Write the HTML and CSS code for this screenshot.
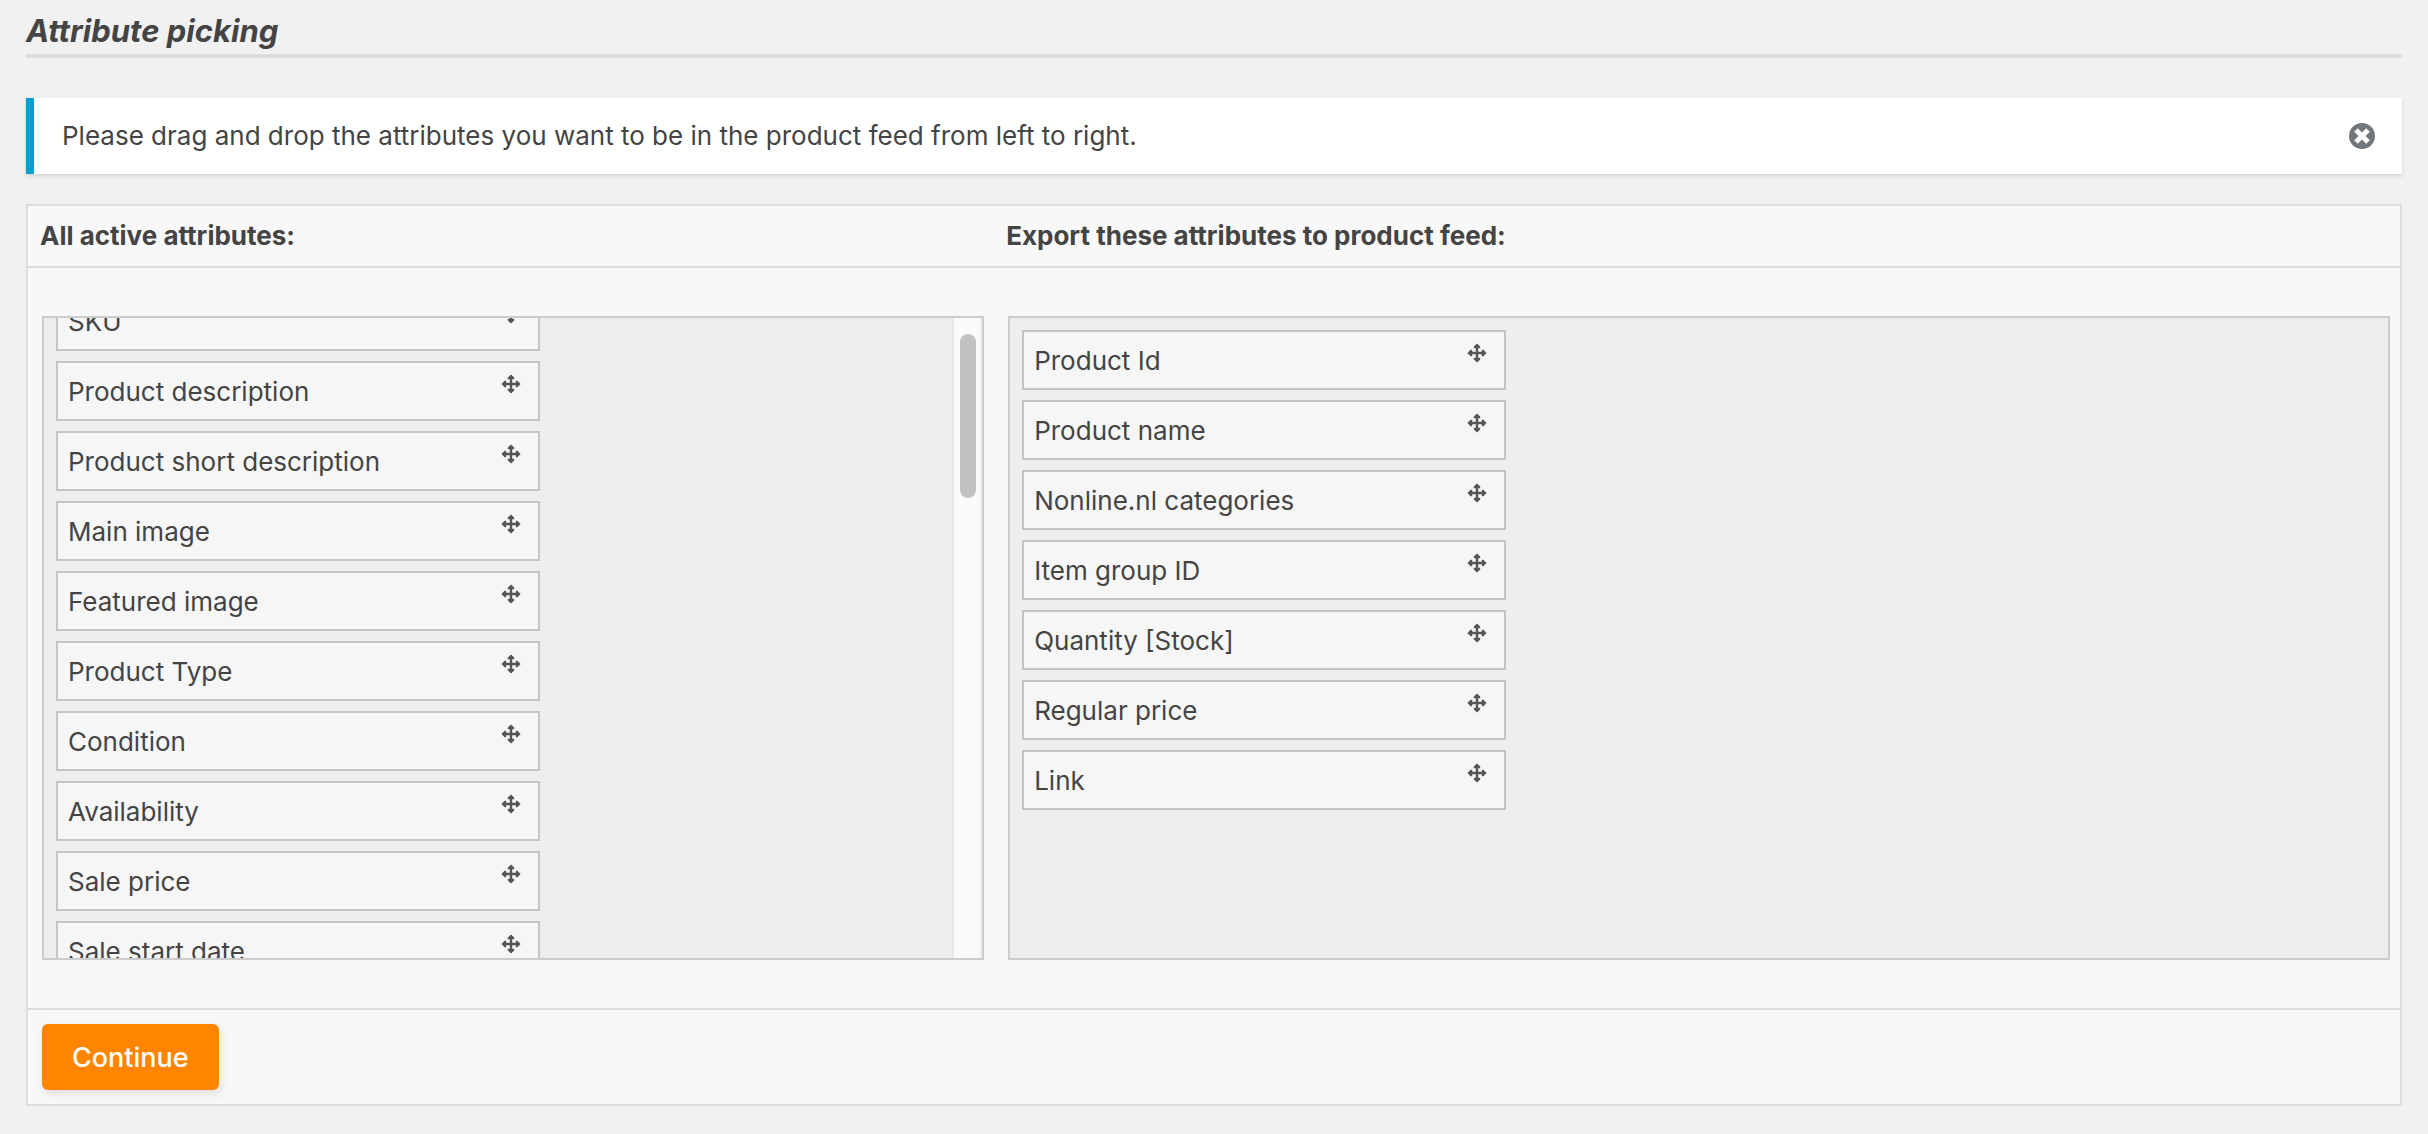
FILE: index.html
```html
<!DOCTYPE html>
<html lang="en">
    <head>
        <meta charset="utf-8">
        <title>Attribute picking</title>
        <link rel="stylesheet" href="styles.css">
    </head>
    <body>
        <svg class="sprite" aria-hidden="true">
            <symbol id="move" viewBox="0 0 20 20">
                <path d="M10 0.4L13.2 3.6V5.2H11.2V8.8H14.8V6.8H16.4L19.6 10L16.4 13.2H14.8V11.2H11.2V14.8H13.2V16.4L10 19.6L6.8 16.4V14.8H8.8V11.2H5.2V13.2H3.6L0.4 10L3.6 6.8H5.2V8.8H8.8V5.2H6.8V3.6Z"/>
            </symbol>
        </svg>

        <h1 class="title">Attribute picking</h1>

        <div class="notice">
            <p>Please drag and drop the attributes you want to be in the product feed from left to right.</p>
            <button class="dismiss" type="button" aria-label="Dismiss">
                <svg viewBox="0 0 26 26">
                    <circle cx="13" cy="13" r="13"/>
                    <path d="M7 7L19 19M19 7L7 19"/>
                </svg>
            </button>
        </div>

        <form class="panel">
            <div class="row head">
                <h2>All active attributes:</h2>
                <h2>Export these attributes to product feed:</h2>
            </div>
            <div class="row lists">
                <div class="box">
                    <ul class="items" id="active">
                        <li class="item">SKU<svg class="move"><use href="#move"/></svg></li>
                        <li class="item">Product description<svg class="move"><use href="#move"/></svg></li>
                        <li class="item">Product short description<svg class="move"><use href="#move"/></svg></li>
                        <li class="item">Main image<svg class="move"><use href="#move"/></svg></li>
                        <li class="item">Featured image<svg class="move"><use href="#move"/></svg></li>
                        <li class="item">Product Type<svg class="move"><use href="#move"/></svg></li>
                        <li class="item">Condition<svg class="move"><use href="#move"/></svg></li>
                        <li class="item">Availability<svg class="move"><use href="#move"/></svg></li>
                        <li class="item">Sale price<svg class="move"><use href="#move"/></svg></li>
                        <li class="item">Sale start date<svg class="move"><use href="#move"/></svg></li>
                    </ul>
                    <div class="track"><div class="thumb"></div></div>
                </div>
                <div class="box">
                    <ul class="items" id="export">
                        <li class="item">Product Id<svg class="move"><use href="#move"/></svg></li>
                        <li class="item">Product name<svg class="move"><use href="#move"/></svg></li>
                        <li class="item">Nonline.nl categories<svg class="move"><use href="#move"/></svg></li>
                        <li class="item">Item group ID<svg class="move"><use href="#move"/></svg></li>
                        <li class="item">Quantity [Stock]<svg class="move"><use href="#move"/></svg></li>
                        <li class="item">Regular price<svg class="move"><use href="#move"/></svg></li>
                        <li class="item">Link<svg class="move"><use href="#move"/></svg></li>
                    </ul>
                </div>
            </div>
            <div class="foot">
                <button class="continue" type="button">Continue</button>
            </div>
        </form>

        <script>
            document.getElementById("active").scrollTop = 39;
        </script>
    </body>
</html>
```

FILE: styles.css
```css
*{
  margin:0px;
  padding:0px;
  box-sizing:border-box;
}

body{
  padding:8px 26px 28px;
  background:#f1f1f1;
  color:#444;
  font-family:Inter, "Liberation Sans", sans-serif;
  font-size:26px;
  line-height:36px;
}

.sprite{
  display:none;
}

.title{
  height:50px;
  border-bottom:4px solid #ddd;
  font-size:31px;
  font-style:italic;
  font-weight:700;
  line-height:46px;
}

.notice{
  display:flex;
  justify-content:space-between;
  align-items:center;
  margin:40px 0px 30px;
  padding:20px 27px 20px 28px;
  border-left:8px solid #00a0d2;
  background:#fff;
  box-shadow:0px 2px 4px rgba(0,0,0,0.12);
}

.dismiss{
  width:26px;
  height:26px;
  border:none;
  background:transparent;
}
.dismiss svg{
  display:block;
  width:26px;
  height:26px;
  fill:#72777c;
}
.dismiss path{
  fill:none;
  stroke:#fff;
  stroke-width:5;
}

.panel{
  border:2px solid #ddd;
  background:#f8f8f8;
}

.row{
  display:grid;
  grid-template-columns:15fr 22fr;
  gap:24px;
}

.head{
  padding:12px;
  border-bottom:2px solid #ddd;
}
.head h2{
  font-size:26px;
  font-weight:700;
}

.lists{
  padding:48px 10px 48px 14px;
}

.box{
  display:flex;
  height:644px;
  border:2px solid #ccc;
  background:#eee;
}

.items{
  flex:1;
  padding:12px;
  overflow-y:auto;
  scrollbar-width:none;
  list-style:none;
}

.item{
  display:flex;
  justify-content:space-between;
  max-width:484px;
  height:60px;
  margin-bottom:10px;
  padding:11px 17px 9px 10px;
  border:2px solid #c5c5c5;
  background:#f6f6f6;
}

.move{
  width:20px;
  height:20px;
  fill:#555;
}

.track{
  width:30px;
  padding:16px 6px;
  border-left:2px solid #e8e8e8;
  border-right:2px solid #ededed;
  background:#fafafa;
}
.thumb{
  width:16px;
  height:164px;
  border-radius:8px;
  background:#c1c1c1;
}

.foot{
  padding:14px;
  border-top:2px solid #ddd;
}

.continue{
  display:block;
  height:66px;
  padding:0px 30px;
  border:none;
  border-radius:6px;
  background:#ff8500;
  box-shadow:2px 4px 8px rgba(0,0,0,0.1);
  color:#fff;
  font-family:inherit;
  font-size:27px;
  font-weight:500;
}
```
